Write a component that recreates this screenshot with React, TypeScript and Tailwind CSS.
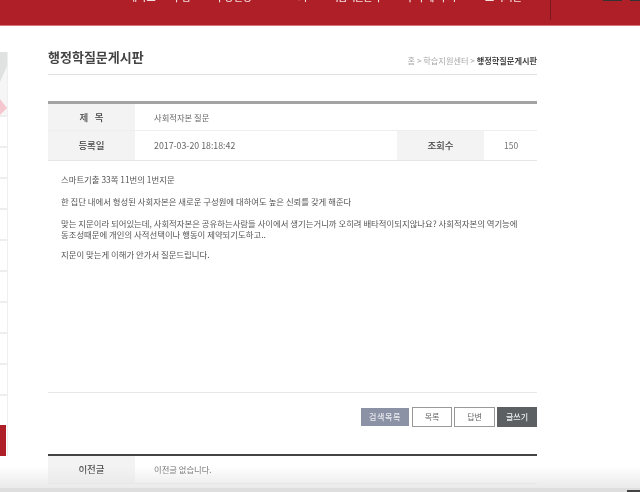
const navItems = [
  { label: "대학교", width: "w-[44px]", tracking: "" },
  { label: "수업", width: "w-[43px]", tracking: "" },
  { label: "수강신청", width: "w-[83px]", tracking: "" },
  { label: "커", width: "w-[32px]", tracking: "" },
  { label: "학습지원센터", width: "w-[73px]", tracking: "tracking-[-1px]" },
  { label: "마이페이지", width: "w-[82px]", tracking: "tracking-[1.8px]" },
  { label: "고객지원", width: "w-[65px]", tracking: "" },
];

const sideRows = Array(10).fill(0);

function Header() {
  return (
    <header className="h-[26px] shrink-0 bg-[#ae1f28] border-b border-[#d9747b] overflow-hidden flex">
      <nav className="ml-[128px] w-[422px] -mt-[9px] flex items-start">
        {navItems.map((item) => (
          <span
            key={item.label}
            className={`${item.width} ${item.tracking} shrink-0 text-[10px] leading-[12px] font-medium text-[#f3dcdd] whitespace-nowrap`}
          >
            {item.label}
          </span>
        ))}
      </nav>
      <div className="w-px h-[20px] bg-[#7d1820]" />
      <div className="ml-[52px] w-[19px] h-[1px] bg-[#333]" />
      <div className="ml-[8px] w-[10px] h-[1px] bg-[#333]" />
    </header>
  );
}

function Sidebar() {
  return (
    <aside className="w-[8px] shrink-0 pt-[26px]">
      <div className="w-[8px] border-r border-[#efefef]">
        <svg width="7" height="63" className="block bg-[#f6f6f6]">
          <polygon points="0,0 7,0 7,14 0,30" fill="#e0e2e1" />
          <polygon points="0,47 7,56 0,63" fill="#f5c6cd" />
        </svg>
        {sideRows.map((_, i) => (
          <div key={i} className="h-[31px] border-t-2 border-[#eeeeee]" />
        ))}
        <div className="h-[31px] bg-[#ae1f28] mr-[1px]" />
      </div>
    </aside>
  );
}

function Label({ children }: { children: React.ReactNode }) {
  return (
    <div className="w-[87px] shrink-0 bg-[#f3f3f3] flex items-center justify-center text-[9.5px] font-medium text-[#444]">
      {children}
    </div>
  );
}

export default function App() {
  return (
    <div
      className="relative w-[640px] h-[492px] overflow-hidden bg-white flex flex-col blur-[0.6px]"
      style={{ fontFamily: '"Noto Sans CJK KR", "Noto Sans", sans-serif' }}
    >
      <Header />
      <div className="flex -mt-[26px] pt-[26px]">
        <Sidebar />
        <main className="ml-[40px] w-[489px]">
          <div className="h-[49px] pt-[22px] border-b border-[#e2e2e2] flex justify-between">
            <h1 className="text-[13px] leading-[18px] font-bold text-[#444]">
              행정학질문게시판
            </h1>
            <p className="text-[8.2px] leading-[12px] pt-[6px] whitespace-nowrap text-[#aaa]">
              홈 &gt; 학습지원센터 &gt;{" "}
              <b className="font-bold text-[#444]">행정학질문게시판</b>
            </p>
          </div>

          <section className="mt-[26px] border-t-[3px] border-[#a3a3a3]">
            <div className="h-[27px] flex border-b border-[#eeeeee]">
              <Label>제&nbsp;&nbsp;&nbsp;목</Label>
              <div className="pl-[19px] flex items-center text-[8.3px] text-[#666]">
                사회적자본 질문
              </div>
            </div>
            <div className="h-[30px] flex border-b border-[#e6e6e6]">
              <Label>등록일</Label>
              <div className="w-[262px] pl-[19px] flex items-center text-[8.8px] text-[#666]">
                2017-03-20 18:18:42
              </div>
              <Label>조회수</Label>
              <div className="pl-[20px] flex items-center text-[8.5px] text-[#777]">
                150
              </div>
            </div>
          </section>

          <article className="h-[232px] pt-[13px] pl-[13px] border-b border-[#e8e8e8] text-[8.4px] leading-[11px] text-[#555] whitespace-nowrap">
            <p>스마트기출 33쪽 11번의 1번지문</p>
            <p className="mt-[11px]">
              한 집단 내에서 형성된 사회자본은 새로운 구성원에 대하여도 높은 신뢰를 갖게 해준다
            </p>
            <p className="mt-[11px]">
              맞는 지문이라 되어있는데, 사회적자본은 공유하는사람들 사이에서 생기는거니까 오히려 배타적이되지않나요? 사회적자본의 역기능에
            </p>
            <p>동조성때문에 개인의 사적선택이나 행동이 제약되기도하고..</p>
            <p className="mt-[9px]">지문이 맞는게 이해가 안가서 질문드립니다.</p>
          </article>

          <div className="mt-[14px] flex justify-end items-start text-[8px]">
            <button className="w-[48px] h-[18px] mt-[1px] bg-[#8b92a6] text-[#e8e8ee] font-medium tracking-[0.6px]">
              검색목록
            </button>
            <button className="ml-[3px] w-[40px] h-[20px] border border-[#999] text-[#666]">
              목록
            </button>
            <button className="ml-[2px] w-[41px] h-[20px] border border-[#999] text-[#666]">
              답변
            </button>
            <button className="ml-[2px] w-[40px] h-[20px] bg-[#5c6062] text-[#eee] font-medium">
              글쓰기
            </button>
          </div>

          <section className="mt-[27px] border-t-2 border-[#444]">
            <div className="h-[28px] flex border-b border-[#e8e8e8]">
              <Label>이전글</Label>
              <div className="pl-[19px] flex items-center text-[8.3px] text-[#666]">
                이전글 없습니다.
              </div>
            </div>
          </section>
        </main>
      </div>

      {/* browser window shadow along the bottom edge */}
      <div className="absolute left-0 right-0 bottom-0 h-[26px] bg-gradient-to-b from-[#ffffff00] to-[#e6e6e6]" />
      <div className="absolute left-0 right-0 bottom-0 h-[4px] bg-[#dedede]" />
      <div className="absolute right-0 bottom-0 w-[13px] h-[2px] bg-[#444]" />
    </div>
  );
}
